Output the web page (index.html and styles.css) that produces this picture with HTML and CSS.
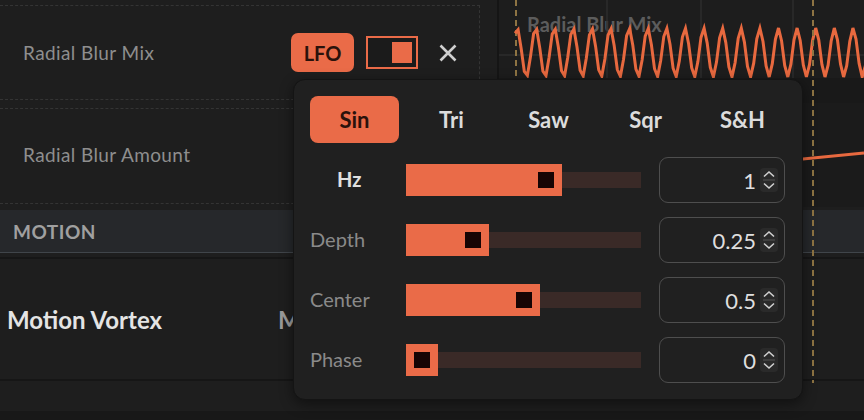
FILE: index.html
```html
<!DOCTYPE html>
<html lang="en">
<head>
    <meta charset="UTF-8">
    <meta name="viewport" content="width=device-width, initial-scale=1.0">
    <title>Automation Lanes</title>
    <link rel="stylesheet" href="styles.css">
</head>
<body>
    <div class="editor">
        <div class="lane-row mix">
            <div class="param">
                <span class="param-name">Radial Blur Mix</span>
                <div class="mod-controls">
                    <button class="lfo-btn">LFO</button>
                    <span class="toggle"><span class="knob"></span></span>
                    <span class="close">
                        <svg width="24" height="24" viewBox="0 0 24 24"><path d="M4.5 4.5 L19.5 19.5 M19.5 4.5 L4.5 19.5" /></svg>
                    </span>
                </div>
            </div>
            <div class="lane">
                <span class="lane-title">Radial Blur Mix</span>
                <svg class="lane-graph" width="365" height="78" viewBox="0 0 365 78">
                    <line class="grid" x1="108" y1="0" x2="108" y2="78" />
                    <line class="grid" x1="202" y1="0" x2="202" y2="78" />
                    <line class="grid" x1="294" y1="0" x2="294" y2="78" />
                    <line class="grid" x1="0" y1="55" x2="365" y2="55" />
                    <line class="marker" x1="17" y1="0" x2="17" y2="78" />
                    <polyline id="wave" class="wave" points="" />
                </svg>
            </div>
        </div>

        <div class="lane-row amount">
            <div class="param">
                <span class="param-name">Radial Blur Amount</span>
            </div>
            <div class="lane">
                <svg class="lane-graph" width="365" height="104" viewBox="0 0 365 104">
                    <line class="auto-line" x1="0" y1="86" x2="365" y2="50" />
                </svg>
            </div>
        </div>

        <div class="section-head">MOTION</div>

        <div class="lane-row vortex">
            <div class="param big">
                <span class="effect-name">Motion Vortex</span>
                <span class="effect-mode">M</span>
            </div>
            <div class="lane"></div>
        </div>

        <div class="footer"></div>

        <div class="playhead"></div>

        <div class="lfo-popup">
            <div class="shapes">
                <div class="shape active">Sin</div>
                <div class="shape">Tri</div>
                <div class="shape">Saw</div>
                <div class="shape">Sqr</div>
                <div class="shape">S&amp;H</div>
            </div>

            <div class="lfo-row">
                <span class="lfo-label hz">Hz</span>
                <div class="slider"><div class="fill" style="width: 156px"><span class="thumb"></span></div></div>
                <div class="num"><span class="val">1</span><span class="spin"><svg width="18" height="24" viewBox="0 0 18 24"><path d="M4 8.5 L9 4 L14 8.5 M4 15.5 L9 20 L14 15.5" /><line x1="3" y1="12" x2="15" y2="12" /></svg></span></div>
            </div>
            <div class="lfo-row">
                <span class="lfo-label">Depth</span>
                <div class="slider"><div class="fill" style="width: 83px"><span class="thumb"></span></div></div>
                <div class="num"><span class="val">0.25</span><span class="spin"><svg width="18" height="24" viewBox="0 0 18 24"><path d="M4 8.5 L9 4 L14 8.5 M4 15.5 L9 20 L14 15.5" /><line x1="3" y1="12" x2="15" y2="12" /></svg></span></div>
            </div>
            <div class="lfo-row">
                <span class="lfo-label">Center</span>
                <div class="slider"><div class="fill" style="width: 134px"><span class="thumb"></span></div></div>
                <div class="num"><span class="val">0.5</span><span class="spin"><svg width="18" height="24" viewBox="0 0 18 24"><path d="M4 8.5 L9 4 L14 8.5 M4 15.5 L9 20 L14 15.5" /><line x1="3" y1="12" x2="15" y2="12" /></svg></span></div>
            </div>
            <div class="lfo-row">
                <span class="lfo-label">Phase</span>
                <div class="slider"><div class="fill" style="width: 32px"><span class="thumb"></span></div></div>
                <div class="num"><span class="val">0</span><span class="spin"><svg width="18" height="24" viewBox="0 0 18 24"><path d="M4 8.5 L9 4 L14 8.5 M4 15.5 L9 20 L14 15.5" /><line x1="3" y1="12" x2="15" y2="12" /></svg></span></div>
            </div>
        </div>
    </div>

    <script>
        // sampled sine preview of the LFO, drawn in lane coords (lane starts at x=499)
        const pts = [];
        for (let x = 515; x <= 870; x += 3.1) {
            const y = 52.5 - 24.5 * Math.cos(2 * Math.PI * (x - 517) / 18.67);
            pts.push((x - 499).toFixed(1) + ',' + y.toFixed(1));
        }
        document.getElementById('wave').setAttribute('points', pts.join(' '));
    </script>
</body>
</html>
```

FILE: styles.css
```css
* { box-sizing: border-box; }
body {
    margin: 0;
    width: 864px;
    height: 420px;
    overflow: hidden;
    background: #1e1e1e;
    font-family: Lato, "Open Sans", sans-serif;
    color: #ddd;
}
.editor { position: relative; height: 420px; }

.lane-row { display: grid; grid-template-columns: 497px 1fr; }
.lane-row.mix { height: 103px; }
.lane-row.amount { height: 104px; }
.lane { border-left: 2px solid #151515; background: #1b1b1b; position: relative; }
.lane-row.mix .lane { background: linear-gradient(#1d1d1d 0 78px, #191919 78px); }

.param {
    width: 480px;
    margin: 5px 0 3px;
    padding-left: 23px;
    display: flex;
    align-items: center;
    border-top: 1px dashed #343434;
    border-bottom: 1px dashed #343434;
    border-right: 1px dashed #343434;
}
.lane-row.amount .param { padding-bottom: 4px; }
.param-name { font-size: 19px; color: #8e8e8e; letter-spacing: 0.4px; }

.mod-controls { margin-left: auto; padding-right: 19px; display: flex; align-items: center; }
.lfo-btn {
    width: 63px;
    height: 39px;
    border: 0;
    border-radius: 7px;
    background: #ea6b48;
    color: #2a120b;
    font-family: inherit;
    font-size: 20px;
    font-weight: 700;
    padding: 0;
}
.toggle {
    width: 52px;
    height: 33px;
    margin-left: 12px;
    border: 2px solid #ea6b48;
    background: #1b1b1b;
    padding: 4px;
    display: flex;
    justify-content: flex-end;
}
.knob { width: 20px; height: 21px; background: #ea6b48; }
.close { margin-left: 18px; width: 24px; height: 24px; }
.close svg path { stroke: #cfcfcf; stroke-width: 2.6; fill: none; }

.lane-title {
    position: absolute;
    left: 28px;
    top: 12px;
    font-size: 20px;
    font-weight: 700;
    color: #5c5c5c;
}
.lane-graph { position: relative; display: block; }
.grid { stroke: #2c2c2c; stroke-width: 1.5; }
.marker { stroke: #8e7443; stroke-width: 2; stroke-dasharray: 6 4; }
.wave { fill: none; stroke: #e8693f; stroke-width: 3; stroke-linejoin: miter; }
.auto-line { stroke: #e8693f; stroke-width: 3; }

.section-head {
    height: 43px;
    margin: 3px 0 4px;
    padding-left: 13px;
    display: flex;
    align-items: center;
    background: #26282b;
    border-bottom: 1px solid #40454a;
    font-size: 19px;
    font-weight: 700;
    color: #a0a0a0;
    letter-spacing: 0.5px;
}

.lane-row.vortex {
    height: 124px;
    border-top: 2px solid #161616;
    border-bottom: 2px solid #161616;
}
.lane-row.vortex .lane { background: #1e1e1e; border-left: 0; }
.param.big { margin: 0; border: 0; padding-left: 7px; }
.effect-name { font-size: 24px; font-weight: 700; color: #e4e4e4; }
.effect-mode { margin-left: 116px; font-size: 24px; font-weight: 700; color: #9a9a9a; }

.footer { height: 40px; border-bottom: 10px solid #181818; }

.playhead {
    position: absolute;
    left: 812px;
    top: 0;
    width: 2px;
    height: 383px;
    background: repeating-linear-gradient(#8e7443 0 6px, transparent 6px 10px);
}

.lfo-popup {
    position: absolute;
    left: 293px;
    top: 79px;
    width: 510px;
    height: 321px;
    padding: 16px 14px 15px 16px;
    background: #202020;
    border: 1px solid #141414;
    border-radius: 12px;
    box-shadow: 0 4px 14px rgba(0, 0, 0, 0.45);
}
.shapes { display: grid; grid-template-columns: repeat(5, 89px); gap: 8px; height: 47px; }
.shape {
    display: flex;
    align-items: center;
    justify-content: center;
    border-radius: 8px;
    font-size: 22px;
    font-weight: 700;
    color: #dcdcdc;
}
.shape.active { background: #ea6b48; color: #2a120b; }

.lfo-row {
    display: grid;
    grid-template-columns: 96px 253px 126px;
    align-items: center;
    height: 46px;
    margin-top: 14px;
}
.lfo-label { font-size: 20px; color: #8a8a8a; padding-bottom: 3px; }
.lfo-label.hz { padding-left: 27px; font-weight: 700; color: #e0e0e0; }

.slider {
    width: 235px;
    height: 32px;
    background: linear-gradient(#3a2a27, #3a2a27) center / 100% 16px no-repeat;
}
.fill {
    height: 32px;
    background: #ea6b48;
    display: flex;
    align-items: center;
    justify-content: flex-end;
    padding-right: 8px;
}
.thumb { width: 16px; height: 16px; background: #160404; }

.num {
    height: 46px;
    border: 1.5px solid #4e4e4e;
    border-radius: 9px;
    display: flex;
    align-items: center;
    justify-content: flex-end;
    padding-right: 6px;
}
.val { font-size: 22px; color: #dedede; }
.spin { margin-left: 4px; width: 18px; height: 24px; background: #2a2a2a; border-radius: 4px; }
.spin svg { display: block; }
.spin path { stroke: #d0d0d0; stroke-width: 1.6; fill: none; }
.spin line { stroke: #555; stroke-width: 1; }
```
